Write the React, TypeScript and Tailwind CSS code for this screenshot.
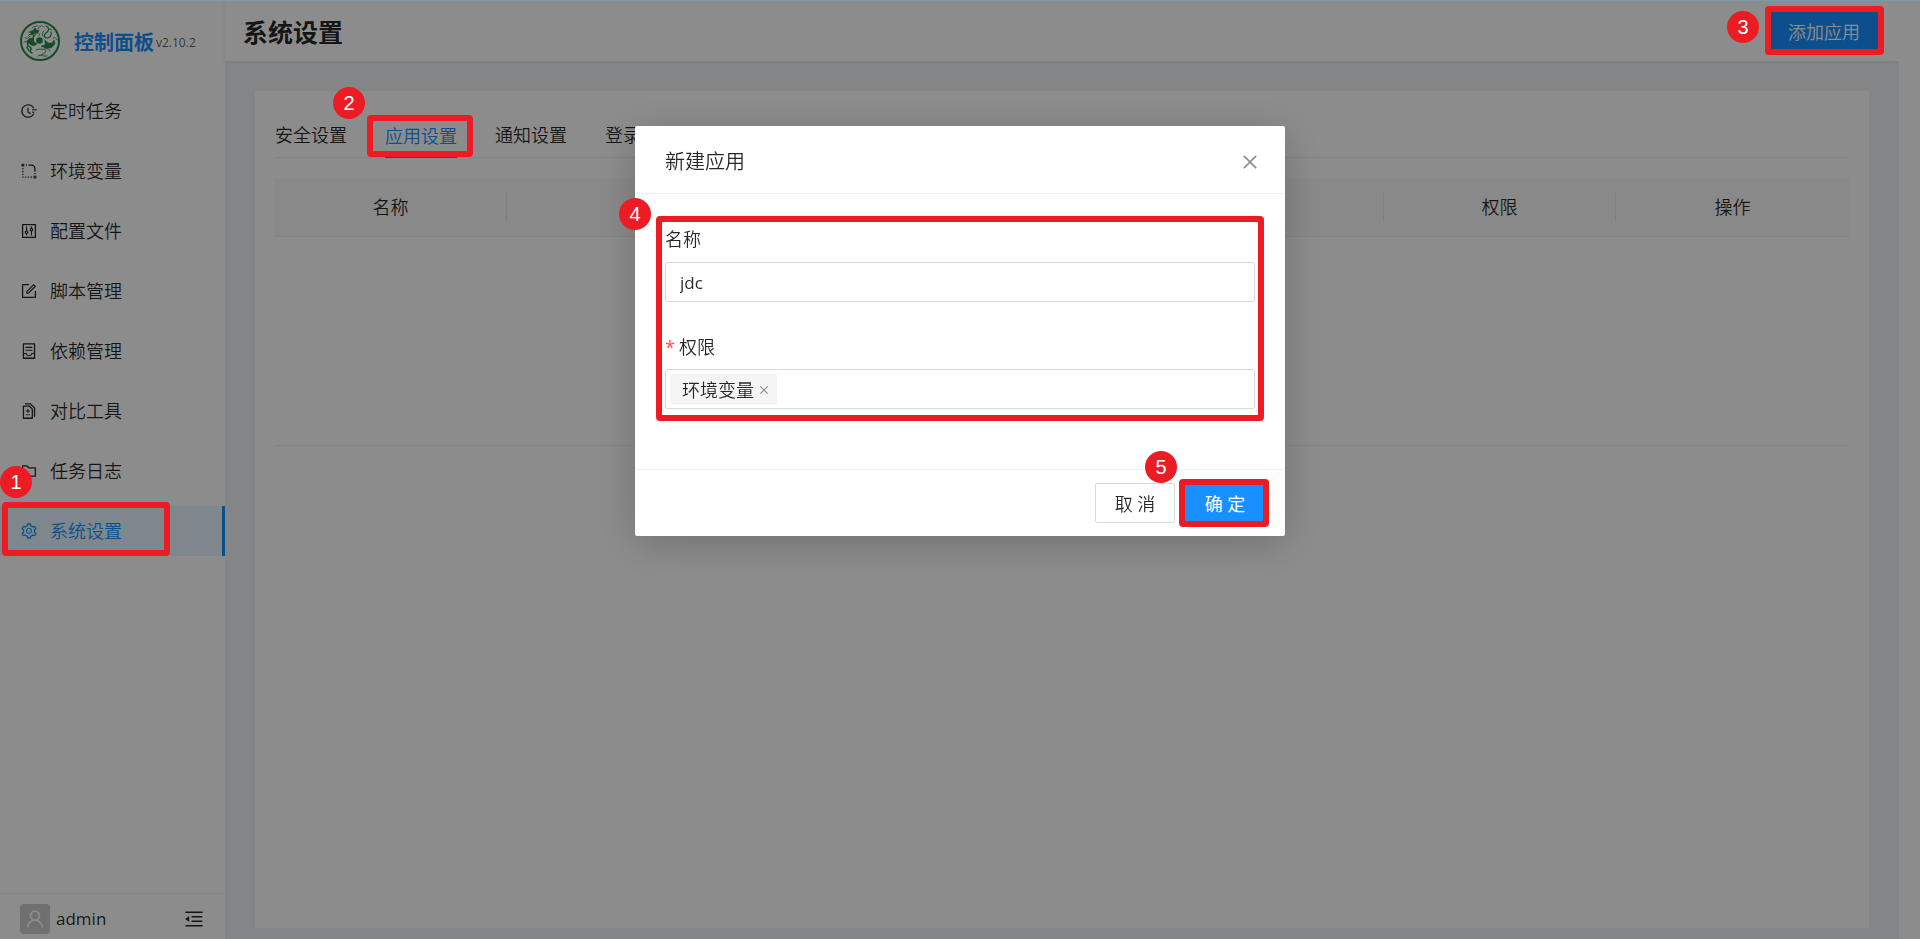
import React, { useState } from "react";
import {
  AiOutlineClose,
  AiOutlineContainer,
  AiOutlineControl,
  AiOutlineDiff,
  AiOutlineFieldTime,
  AiOutlineFolder,
  AiOutlineForm,
  AiOutlineMenuFold,
  AiOutlineRadiusSetting,
  AiOutlineSetting,
  AiOutlineUser,
} from "react-icons/ai";

const menus = [
  { name: "定时任务", icon: AiOutlineFieldTime },
  { name: "环境变量", icon: AiOutlineRadiusSetting },
  { name: "配置文件", icon: AiOutlineControl },
  { name: "脚本管理", icon: AiOutlineForm },
  { name: "依赖管理", icon: AiOutlineContainer },
  { name: "对比工具", icon: AiOutlineDiff },
  { name: "任务日志", icon: AiOutlineFolder },
  { name: "系统设置", icon: AiOutlineSetting },
];

const tabs = ["安全设置", "应用设置", "通知设置", "登录日志", "其他设置"];

const columns = [
  { title: "名称", width: "w-[232px]" },
  { title: "Client ID", width: "" },
  { title: "Client Secret", width: "" },
  { title: "权限", width: "w-[232px]" },
  { title: "操作", width: "w-[233px]" },
];

function Step({ n, className }: { n: number; className: string }) {
  return (
    <span className={`absolute z-50 flex size-8 items-center justify-center rounded-full bg-[#ed1c24] font-['Liberation_Sans',sans-serif] text-xl leading-none font-normal text-white ${className}`}>
      {n}
    </span>
  );
}

function Frame({ className }: { className: string }) {
  return <span className={`pointer-events-none absolute z-50 rounded-sm border-6 border-[#ed1c24] ${className}`} />;
}

function Logo() {
  return (
    <svg viewBox="0 0 40 40" className="size-10 shrink-0" fill="none" stroke="#238c44" strokeLinecap="round" strokeLinejoin="round">
      <circle cx="20" cy="20" r="19" strokeWidth="2" />
      <circle cx="19.5" cy="19.5" r="3.3" fill="#238c44" stroke="none" />
      {/* head and horns */}
      <path fill="#238c44" strokeWidth="0.6" d="M9 11l4-1.5 2-2.5 1.5 2 2.5.5-1.5 2.5-3 .5-1.5 1.5-3-.5 1.5-1.5z" />
      <path strokeWidth="0.8" d="M12 7c2-2 4-2 6-2M18 8c1-2 1-2 3-3M10 13l-2 2M17 12c3 0 3 2 2 3" />
      {/* left body and claws */}
      <path strokeWidth="1.4" d="M15 14c-3 1-1 4-3 5" />
      <path fill="#238c44" strokeWidth="0.8" d="M13 17c-5 0-6 3-6 6l2-1c1 2 4 3 6 2l2-1-3-2z" />
      <path strokeWidth="1.4" d="M8 23c-2 3 4 2 3 5s-1 3 1 4M7 26c0 2 2 2 2 4" />
      <path strokeWidth="0.8" d="M5 17c2 1 4 0 5-2M4 21c2 0 3-1 4-2" />
      {/* right body and neck loop */}
      <path strokeWidth="1.2" d="M26 5c4 2 3 5 0 7-3 2-2 5 1 5s5-3 4-6" />
      <path fill="#238c44" strokeWidth="0.6" d="M25 19l3 3 4 0 2-3 1 4-4 4-6 0-4-2 4-1z" />
      <path strokeWidth="0.8" d="M29 8l3 1M24 10l-2 2 1 3M33 17c2-1 3 0 4 2M24 6l-2-1" />
      {/* tail */}
      <path strokeWidth="0.9" d="M16 29c3-2 6 0 9-1s4 0 5 2M25 29c2 2-1 4-4 5M18 35c3-2 6 1 9 0" />
    </svg>
  );
}

export default function App() {
  const [activeTab, setActiveTab] = useState("应用设置");
  const [open, setOpen] = useState(true);
  const [name, setName] = useState("jdc");
  const [scopes, setScopes] = useState(["环境变量"]);

  return (
    <div className="flex min-h-screen bg-white pt-px font-['Open_Sans','Noto_Sans_CJK_SC',sans-serif] text-lg leading-7 font-[350] text-black/85">
      <div className="fixed inset-x-0 top-0 z-50 h-px bg-[#779bab]" />

      <aside className="flex w-[225px] shrink-0 flex-col shadow-[2px_0_8px_rgba(29,35,41,0.05)]">
        <div className="flex items-center px-5 pt-5 pb-[25px]">
          <Logo />
          <h1 className="ml-3.5 pt-1 text-xl font-bold text-[#1890ff]">控制面板</h1>
          <span className="ml-0.5 pt-1 text-xs font-normal text-black/65">v2.10.2</span>
        </div>
        <nav className="flex flex-col gap-2.5">
          {menus.map(({ name: label, icon: Icon }) => {
            const active = label === "系统设置";
            return (
              <div key={label} className="relative">
                <a
                  href="#"
                  className={active
                    ? "flex h-[50px] items-center gap-3 border-r-3 border-[#1890ff] bg-[#e6f7ff] pl-5 text-[#1890ff]"
                    : "flex h-[50px] items-center gap-3 pl-5"}
                >
                  <Icon size={18} />
                  {label}
                </a>
                {active && <Frame className="-top-1 bottom-0 left-0.5 w-[168px]" />}
                {active && <Step n={1} className="-top-10 left-0" />}
              </div>
            );
          })}
        </nav>
        <div className="mt-auto flex h-[46px] items-center border-t border-[#f0f0f0] pt-1 pr-5 pl-5">
          <span className="flex size-[30px] items-center justify-center rounded-sm bg-[#ccc] text-white">
            <AiOutlineUser size={22} />
          </span>
          <span className="ml-1.5 text-[17px] font-normal">admin</span>
          <button type="button" aria-label="收起菜单" className="ml-auto">
            <AiOutlineMenuFold size={22} />
          </button>
        </div>
      </aside>

      <div className="flex min-w-0 flex-1 flex-col bg-[#f0f2f5]">
        <header className="flex h-[60px] items-center justify-between bg-white pr-5 pl-[18px] shadow-[0_1px_4px_rgba(0,21,41,0.08)]">
          <h2 className="pt-0.5 text-[25px] font-bold">系统设置</h2>
          <div className="relative">
            <button type="button" onClick={() => setOpen(true)} className="h-10 w-[110px] rounded-xs bg-[#1890ff] pt-0.5 text-white">
              添加应用
            </button>
            <Frame className="-top-[5px] -right-[5px] -bottom-1 -left-1" />
            <Step n={3} className="top-0 right-[120px]" />
          </div>
        </header>

        <main className="mx-[30px] mt-[30px] mb-[11px] flex-1 bg-white px-5 pt-5">
          <div className="flex gap-[38px] border-b border-[#f0f0f0]">
            {tabs.map((tab) => (
              <div key={tab} className="relative">
                <button
                  type="button"
                  onClick={() => setActiveTab(tab)}
                  className={tab === activeTab
                    ? "-mb-px h-[47px] border-b-2 border-[#1890ff] pt-1 text-[#1890ff]"
                    : "h-[46px] pt-0.5"}
                >
                  {tab}
                </button>
                {tab === "应用设置" && <Frame className="top-1 -right-4 bottom-0 -left-[18px]" />}
                {tab === "应用设置" && <Step n={2} className="-top-6 -left-13" />}
              </div>
            ))}
          </div>

          <table className="mt-5 w-full table-fixed border-collapse">
            <thead>
              <tr className="h-[58px] border-b border-[#f0f0f0] bg-[#fafafa]">
                {columns.map((c, i) => (
                  <th key={c.title} className={`p-0 pt-px font-[350] ${c.width}`}>
                    <div className={i < columns.length - 1 ? "border-r border-[#e8e8e8]" : ""}>{c.title}</div>
                  </th>
                ))}
              </tr>
            </thead>
            <tbody>
              <tr className="h-[209px] border-b border-[#f0f0f0]">
                <td colSpan={5} className="text-center text-black/25">暂无数据</td>
              </tr>
            </tbody>
          </table>
        </main>
      </div>
      <div className="w-[21px] shrink-0 bg-white" />

      {open && (
        <div className="fixed inset-0 top-px z-40 bg-black/45 pt-[125px]">
          <form
            role="dialog"
            aria-label="新建应用"
            onSubmit={(e) => e.preventDefault()}
            className="relative mx-auto w-[650px] rounded-xs bg-white shadow-[0_8px_40px_rgba(0,0,0,0.2)]"
          >
            <div className="flex h-[68px] items-center justify-between border-b border-[#f0f0f0] pt-1 pr-[25px] pl-[30px]">
              <h3 className="text-xl">新建应用</h3>
              <button type="button" aria-label="关闭" onClick={() => setOpen(false)} className="text-black/45">
                <AiOutlineClose size={20} />
              </button>
            </div>

            <div className="relative px-[30px] pt-[31px] pb-[60px]">
              <label htmlFor="name" className="block">名称</label>
              <input
                id="name"
                value={name}
                onChange={(e) => setName(e.target.value)}
                className="mt-[9px] h-10 w-full rounded-xs border border-[#d9d9d9] px-3.5 text-[17px] font-normal"
              />
              <label htmlFor="scopes" className="mt-[31px] flex">
                <span className="mr-1 font-normal text-[#ff4d4f]">*</span>权限
              </label>
              <div className="mt-2 flex h-10 items-center rounded-xs border border-[#d9d9d9] px-[5px]">
                {scopes.map((s) => (
                  <span key={s} className="flex h-[30px] items-center gap-1 rounded-xs border border-[#f0f0f0] bg-[#f5f5f5] pt-px pr-1.5 pl-2.5">
                    {s}
                    <button type="button" aria-label={`移除${s}`} onClick={() => setScopes(scopes.filter((x) => x !== s))} className="text-black/45">
                      <AiOutlineClose size={12} />
                    </button>
                  </span>
                ))}
                <input id="scopes" className="ml-1 min-w-0 flex-1 outline-none" />
              </div>
              <Frame className="top-[22px] right-[21px] bottom-12 left-[21px]" />
              <Step n={4} className="top-1 -left-4" />
            </div>

            <div className="flex justify-end gap-2.5 border-t border-[#f0f0f0] px-5 py-[13px]">
              <button type="button" onClick={() => setOpen(false)} className="h-10 w-20 rounded-xs border border-[#d9d9d9] pt-0.5">
                取 消
              </button>
              <div className="relative">
                <button type="submit" className="h-10 w-20 rounded-xs bg-[#1890ff] pt-0.5 font-normal text-white">确 定</button>
                <Frame className="-top-1 -right-1 -bottom-1 -left-1.5" />
                <Step n={5} className="-top-8 -left-10" />
              </div>
            </div>
          </form>
        </div>
      )}
    </div>
  );
}
